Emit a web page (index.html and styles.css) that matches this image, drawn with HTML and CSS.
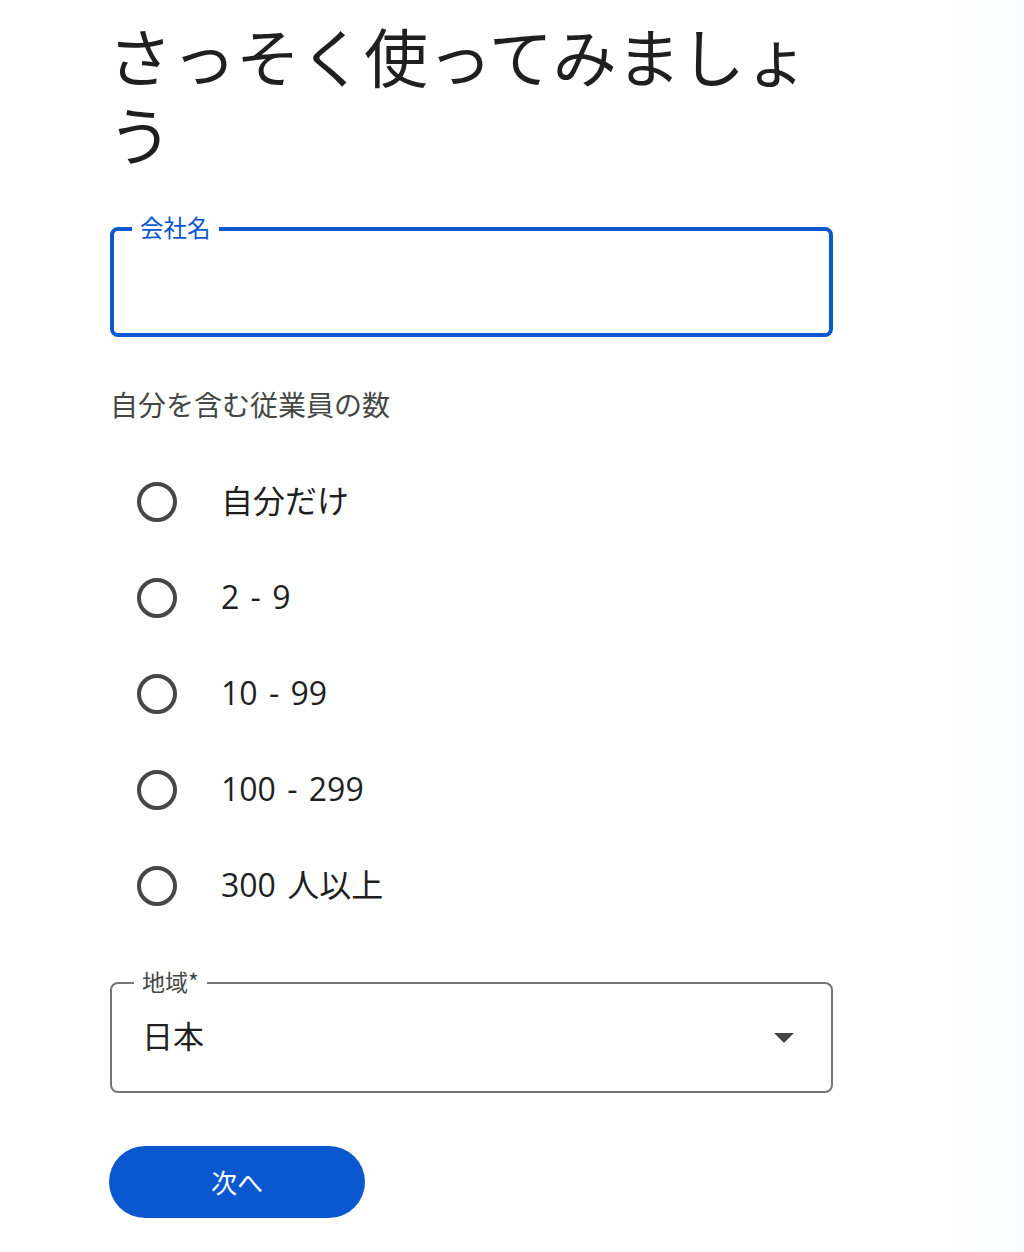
FILE: index.html
```html
<!DOCTYPE html>
<html lang="ja">
<head>
<meta charset="utf-8">
<title>さっそく使ってみましょう</title>
<link rel="stylesheet" href="styles.css">
</head>
<body>
<main class="page">
  <h1 class="title">さっそく使ってみましょう</h1>

  <div class="field field-focused">
    <span class="field-label">会社名</span>
  </div>

  <p class="group-label">自分を含む従業員の数</p>

  <ul class="radios">
    <li class="radio-row"><span class="radio"></span><span class="radio-text">自分だけ</span></li>
    <li class="radio-row"><span class="radio"></span><span class="radio-text">2 - 9</span></li>
    <li class="radio-row"><span class="radio"></span><span class="radio-text">10 - 99</span></li>
    <li class="radio-row"><span class="radio"></span><span class="radio-text">100 - 299</span></li>
    <li class="radio-row"><span class="radio"></span><span class="radio-text">300 人以上</span></li>
  </ul>

  <div class="field field-select">
    <span class="field-label select-label">地域*</span>
    <span class="select-value">日本</span>
    <svg class="caret" width="20" height="10" viewBox="0 0 20 10"><path d="M0 0 L20 0 L10 10 Z" fill="#444746"/></svg>
  </div>

  <button class="next-btn" type="button">次へ</button>
</main>
</body>
</html>
```

FILE: styles.css
```css
* { box-sizing: border-box; }

html, body {
  margin: 0;
  padding: 0;
}

body {
  width: 1024px;
  min-height: 1252px;
  font-family: "Noto Sans CJK JP", "Noto Sans", sans-serif;
  color: #1f1f1f;
  background: linear-gradient(to right, #ffffff 0%, #ffffff 92%, #fafbfd 100%);
}

.page {
  width: 722px;
  margin-left: 110px;
  padding-top: 15px;
  display: flex;
  flex-direction: column;
  align-items: flex-start;
}

.title {
  margin: 0;
  font-size: 64px;
  line-height: 78px;
  font-weight: 400;
  color: #1f1f1f;
  width: 100%;
  margin-left: -2px;
}

.field {
  position: relative;
  width: 723px;
  border-radius: 8px;
}

.field-focused {
  margin-top: 56px;
  height: 110px;
  border: 4px solid #0b57d0;
}

.field-label {
  position: absolute;
  top: -18px;
  left: 18px;
  padding: 0 8px;
  background: #ffffff;
  font-size: 23.5px;
  line-height: 28px;
  color: #0b57d0;
}

.group-label {
  margin: 49px 0 0;
  font-size: 28px;
  line-height: 36px;
  color: #444746;
}

.radios {
  list-style: none;
  margin: 32px 0 0;
  padding: 0;
  display: flex;
  flex-direction: column;
}

.radio-row {
  height: 96px;
  display: flex;
  align-items: center;
  padding-left: 27px;
  gap: 44px;
}

.radio {
  width: 40px;
  height: 40px;
  border: 4px solid #444746;
  border-radius: 50%;
  flex: none;
}

.radio-text {
  font-family: "Open Sans", "Noto Sans CJK JP", sans-serif;
  font-size: 32px;
  line-height: 40px;
  word-spacing: 3px;
  color: #1f1f1f;
  padding-bottom: 3px;
}

.field-select {
  margin-top: 48px;
  height: 111px;
  border: 2px solid #747775;
  display: flex;
  align-items: center;
  padding: 0 37px 6px 32px;
  justify-content: space-between;
}

.select-label {
  top: -17px;
  left: 22px;
  padding: 0 8px;
  font-size: 23px;
  color: #444746;
}

.select-value {
  font-size: 31px;
  line-height: 40px;
  color: #1f1f1f;
  margin-left: -2px;
}

.caret {
  display: block;
  margin-top: 6px;
}

.next-btn {
  margin-top: 53px;
  margin-left: -1px;
  width: 256px;
  height: 72px;
  border: none;
  border-radius: 36px;
  background: #0b57d0;
  color: #ffffff;
  font-family: "Noto Sans CJK JP", "Noto Sans", sans-serif;
  font-size: 26px;
  line-height: 32px;
  padding: 0;
}
```
